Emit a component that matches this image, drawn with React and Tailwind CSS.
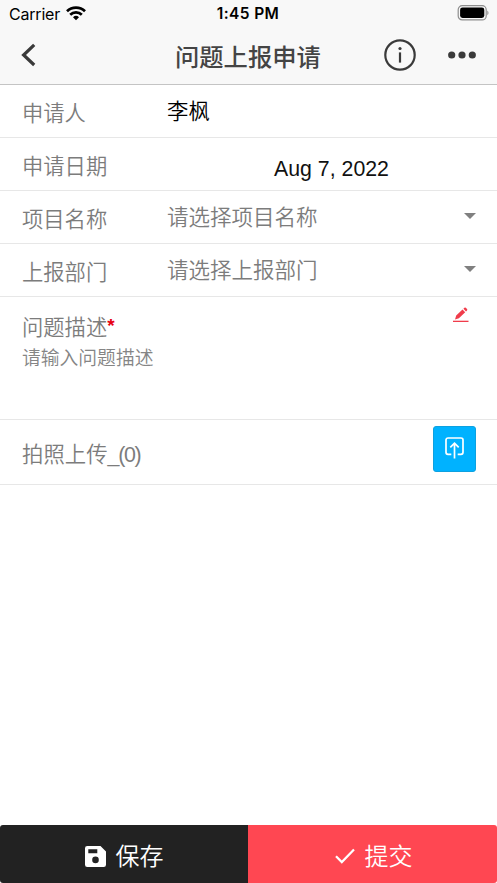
import { useState } from "react";

const rows = [
  { label: "申请人", value: "李枫", type: "text" },
  { label: "申请日期", value: "Aug 7, 2022", type: "date" },
  { label: "项目名称", value: "请选择项目名称", type: "select" },
  { label: "上报部门", value: "请选择上报部门", type: "select" },
];

function StatusBar() {
  return (
    <div className="h-7 flex items-center justify-between pl-[9px] pr-2 text-black font-['Inter','Noto_Sans_CJK_SC',sans-serif]">
      <div className="w-[148px] flex items-center gap-[6px]">
        <span className="text-[16px] leading-7 tracking-[-0.2px]">Carrier</span>
        <svg className="-mt-px" width="20" height="15" viewBox="0 0 20 15" fill="none" stroke="black" strokeWidth="2.7">
          <path d="M1 5.3a12.8 12.8 0 0 1 18 0" />
          <path d="M4.2 8.7a8.2 8.2 0 0 1 11.6 0" />
          <path d="M7 11.2a4.3 4.3 0 0 1 6 0L10 14.2z" fill="black" stroke="none" />
        </svg>
      </div>
      <span className="text-[15.5px] leading-7 font-semibold tracking-[0.4px]">1:45 PM</span>
      <div className="w-[150px] flex justify-end">
        <svg className="-mt-0.5" width="32" height="16" viewBox="0 0 32 16">
          <rect x="1.2" y="0.7" width="28" height="14.2" rx="4" fill="none" stroke="#8e8e8e" strokeWidth="1.2" />
          <rect x="3.1" y="2.6" width="24.2" height="10.4" rx="2.4" fill="black" />
          <path d="M30.3 5.5c1.6.8 1.6 4 0 4.8z" fill="#8e8e8e" />
        </svg>
      </div>
    </div>
  );
}

function NavBar() {
  return (
    <div className="h-14 flex items-center pl-5 pr-[21px] text-[#3a3a3a]">
      <svg className="w-[155px] h-6 shrink-0 -mt-0.5" viewBox="0 0 155 24" fill="none" stroke="currentColor" strokeWidth="3.2">
        <path d="M14.2 1.9 3.6 12l10.6 10" />
      </svg>
      <h1 className="flex-1 text-[24.3px] leading-[58px] font-medium text-[#444] whitespace-nowrap">问题上报申请</h1>
      <div className="flex items-center gap-8 shrink-0 -mt-0.5">
        <svg width="32" height="32" viewBox="0 0 32 32">
          <circle cx="16" cy="16" r="14.7" fill="none" stroke="currentColor" strokeWidth="2.2" />
          <circle cx="16" cy="9.5" r="1.6" fill="currentColor" />
          <path d="M16 13.4v10.2" stroke="currentColor" strokeWidth="2.2" />
        </svg>
        <svg width="28" height="8" viewBox="0 0 28 8" fill="currentColor">
          <circle cx="3.7" cy="4" r="3.6" />
          <circle cx="14" cy="4" r="3.6" />
          <circle cx="24.3" cy="4" r="3.6" />
        </svg>
      </div>
    </div>
  );
}

function FormRow({ label, value, type }) {
  return (
    <div className="h-[53px] flex items-center border-b border-[#e7e7e7] pl-[22px] pr-[21px]">
      <label className="w-[145px] shrink-0 pt-0.5 text-[21.3px] leading-none font-[350] text-[#7c7c7c]">{label}</label>
      {type === "text" && <span className="pb-0.5 text-[21.4px] leading-none font-[350] text-black">{value}</span>}
      {type === "date" && (
        <span className="flex-1 pt-3 text-center pl-5 text-[21.3px] leading-none text-[#111] font-['Liberation_Sans',sans-serif]">
          {value}
        </span>
      )}
      {type === "select" && (
        <>
          <span className="flex-1 pb-0.5 text-[21.5px] leading-none font-[350] text-[#7c7c7c]">{value}</span>
          <svg className="mb-0.5" width="12" height="6" viewBox="0 0 12 6" fill="#808080">
            <path d="M0 0h12L6 6z" />
          </svg>
        </>
      )}
    </div>
  );
}

export default function App() {
  const [description, setDescription] = useState("");

  return (
    <div className="h-screen flex flex-col overflow-hidden bg-white font-['Noto_Sans_CJK_SC',sans-serif]">
      <header className="shrink-0 h-[85px] bg-[#f8f8f8] border-b border-[#c4c4c4]">
        <StatusBar />
        <NavBar />
      </header>

      <main className="flex-1">
        {rows.map((row) => (
          <FormRow key={row.label} {...row} />
        ))}

        {/* Problem description */}
        <div className="h-[123px] flex items-start justify-between border-b border-[#e7e7e7] pl-[22px] pr-7">
          <div className="pt-[18px]">
            <div className="flex h-[22px] text-[21.3px] leading-[22px] font-[350] text-[#7c7c7c]">
              问题描述
              <span className="text-[19px] leading-[21px] font-bold text-[#e60012] font-['Liberation_Sans',sans-serif]">*</span>
            </div>
            <textarea
              className="block mt-[9px] w-[300px] h-12 resize-none outline-none text-[18.8px] leading-[22px] font-[350] text-[#7c7c7c] placeholder:text-[#858585]"
              placeholder="请输入问题描述"
              value={description}
              onChange={(e) => setDescription(e.target.value)}
            />
          </div>
          <svg className="mt-[10px]" width="16" height="16" viewBox="0 0 16 16" fill="#f03c4b">
            <path d="M2 12.4l1.2-3.8 6.3-6 2.7 2.7-6.3 6zM10.4 1.8l1-1q.7-.7 1.4 0l1.2 1.2q.7.7 0 1.4l-1 1z" />
            <path d="M0 13.7h15.5V15H0z" />
          </svg>
        </div>

        {/* Photo upload */}
        <div className="h-[65px] flex items-center justify-between border-b border-[#e7e7e7] pl-[22px] pr-[21px]">
          <div className="pt-[5px] text-[21.4px] leading-none font-[350] text-[#7c7c7c]">
            拍照上传<span className="font-['Liberation_Sans',sans-serif] tracking-[-1.3px]">_(0)</span>
          </div>
          <button className="w-[43px] h-[46px] mb-[6px] flex items-center justify-center rounded-[3px] border border-[#0da1e0] bg-[#00b2ff]">
            <svg className="mb-0.5" width="19" height="22" viewBox="0 0 19 22" fill="none" stroke="white" strokeWidth="1.7">
              <path d="M6.3 17.3H3a2 2 0 0 1-2-2V3a2 2 0 0 1 2-2h13a2 2 0 0 1 2 2v12.3a2 2 0 0 1-2 2h-3.3" />
              <path d="M9.5 21.5V6.5M5.3 10.4l4.2-4.2 4.2 4.2" />
            </svg>
          </button>
        </div>
      </main>

      <footer className="shrink-0 h-[58px] flex text-white text-[24px] font-[350]">
        <button className="w-[248px] flex items-center justify-center gap-[10px] rounded-l-[3px] bg-[#222]">
          <svg className="mt-1" width="21" height="21" viewBox="0 0 21 21" fill="white" fillRule="evenodd">
            <path d="M2.3 0h13.2L21 5.5v13.2a2.3 2.3 0 0 1-2.3 2.3H2.3A2.3 2.3 0 0 1 0 18.7V2.3A2.3 2.3 0 0 1 2.3 0zM3.3 3.2v4h9v-4zM10.5 10.6a3.3 3.3 0 1 0 0 6.6 3.3 3.3 0 0 0 0-6.6z" />
          </svg>
          <span className="leading-none pt-0.5">保存</span>
        </button>
        <button className="flex-1 flex items-center justify-center gap-[10px] rounded-r-[3px] bg-[#ff4752] pl-0.5">
          <svg className="mt-1" width="20" height="16" viewBox="0 0 20 16" fill="none" stroke="white" strokeWidth="2.2">
            <path d="M1 8.3l5.8 5.8L19 1.5" />
          </svg>
          <span className="leading-none pt-0.5">提交</span>
        </button>
      </footer>
    </div>
  );
}
